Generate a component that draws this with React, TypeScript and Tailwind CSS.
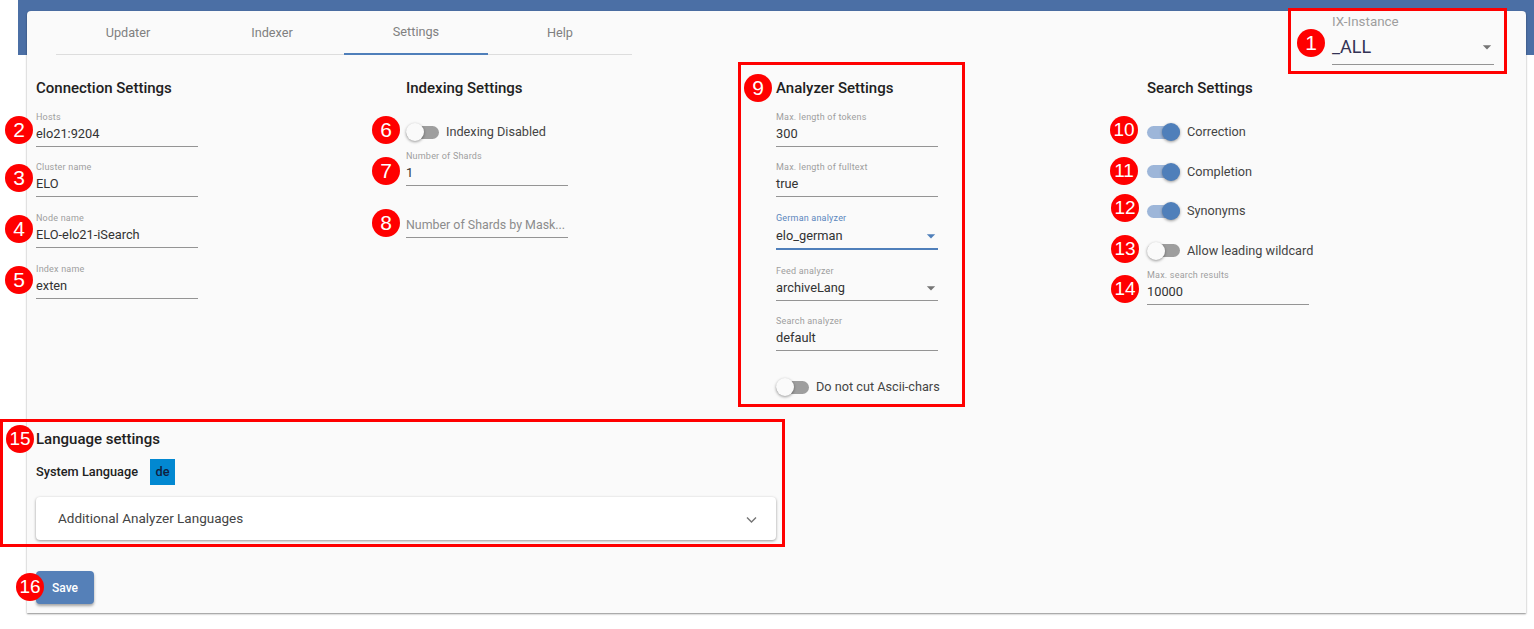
import React from 'react';

const tabs = ['Updater', 'Indexer', 'Settings', 'Help'];

const badges = [
  { n: 1, pos: 'left-[1297px] top-[29px]' },
  { n: 2, pos: 'left-[5px] top-[116px]' },
  { n: 3, pos: 'left-[5px] top-[164px]' },
  { n: 4, pos: 'left-[5px] top-[215px]' },
  { n: 5, pos: 'left-[5px] top-[266px]' },
  { n: 6, pos: 'left-[372px] top-[116px]' },
  { n: 7, pos: 'left-[372px] top-[157px]' },
  { n: 8, pos: 'left-[372px] top-[209px]' },
  { n: 9, pos: 'left-[744px] top-[74px]' },
  { n: 10, pos: 'left-[1110px] top-[116px]' },
  { n: 11, pos: 'left-[1110px] top-[157px]' },
  { n: 12, pos: 'left-[1111px] top-[194px]' },
  { n: 13, pos: 'left-[1111px] top-[235px]' },
  { n: 14, pos: 'left-[1111px] top-[275px]' },
  { n: 15, pos: 'left-[6px] top-[425px]' },
  { n: 16, pos: 'left-[16px] top-[573px]' },
];

const Arrow = ({ color = '#757575' }: { color?: string }) => (
  <svg width="20" height="20" viewBox="0 0 24 24" fill={color} className="mr-[-3px] shrink-0">
    <path d="M7 10l5 5 5-5z" />
  </svg>
);

interface FieldProps {
  label?: string;
  value: string;
  select?: boolean;
  focused?: boolean;
  className?: string;
}

const Field = ({ label, value, select, focused, className = '' }: FieldProps) => (
  <div className={`w-[162px] ${className}`}>
    {label && (
      <div className={`h-3 pt-px text-[9px] leading-3 tracking-[0.2px] ${focused ? 'text-[#5a86bd]' : 'text-[#9e9e9e]'}`}>{label}</div>
    )}
    <div
      className={`flex h-6 items-center justify-between text-[12.8px] text-[#333333] ${
        focused ? 'border-b-2 border-[#4f7fba] h-[25px]' : 'border-b border-[#949494]'
      } box-content`}
    >
      <span>{value}</span>
      {select && <Arrow color={focused ? '#4f7fba' : '#757575'} />}
    </div>
  </div>
);

const Toggle = ({ label, on, className = '' }: { label: string; on?: boolean; className?: string }) => (
  <div className={`flex h-5 items-center gap-[7px] text-[12.7px] text-[#444444] ${className}`}>
    <div className={`relative h-[13px] w-[33px] rounded-full ${on ? 'bg-[#9db6d9]' : 'bg-[#9e9e9e]'}`}>
      <div
        className={`absolute top-[-2.5px] h-[18px] w-[18px] rounded-full shadow-[0_1px_3px_rgba(0,0,0,0.4)] ${
          on ? 'right-0 bg-[#4f7fba]' : 'left-0 bg-[#fafafa]'
        }`}
      />
    </div>
    <span>{label}</span>
  </div>
);

const Heading = ({ children }: { children: React.ReactNode }) => (
  <h2 className="text-[15px] leading-5 font-medium text-[#212121]">{children}</h2>
);

const App = () => {
  return (
    <div className="relative h-[629px] w-[1534px] overflow-hidden bg-white font-['Roboto',sans-serif]">
      <div className="ml-[18px] h-[55px] bg-[#4b6fa5]" />

      <div className="relative ml-[27px] mt-[-44px] w-[1499px] rounded-t bg-[#fafafa] pb-[9px] shadow-[0_1px_2px_rgba(0,0,0,0.45)]">
        <div className="ml-[29px] flex h-11 w-[576px] border-b border-[#dddddd]">
          {tabs.map(tab => (
            <div
              key={tab}
              className={`flex h-11 w-36 items-center justify-center text-[12.7px] text-[#808080] ${
                tab === 'Settings' ? 'border-b-2 border-[#4f7fba]' : ''
              }`}
            >
              {tab}
            </div>
          ))}
        </div>

        <div className="absolute left-[1305px] top-[1px] w-[162px]">
          <div className="h-[19px] pt-px text-[13.4px] leading-[18px] text-[#9e9e9e]">IX-Instance</div>
          <div className="flex h-[31px] items-center justify-between border-b border-[#949494] pb-[2px] text-lg text-[#333355] box-content">
            <span>_ALL</span>
            <Arrow />
          </div>
        </div>

        <div className="grid grid-cols-[370px_370px_371px_370px] pl-[9px] pt-[23px]">
          <div>
            <Heading>Connection Settings</Heading>
            <Field label="Hosts" value="elo21:9204" className="mt-3" />
            <Field label="Cluster name" value="ELO" className="mt-[13px]" />
            <Field label="Node name" value="ELO-elo21-iSearch" className="mt-[14px]" />
            <Field label="Index name" value="exten" className="mt-[14px]" />
          </div>
          <div>
            <Heading>Indexing Settings</Heading>
            <Toggle label="Indexing Disabled" className="mt-6" />
            <Field label="Number of Shards" value="1" className="mt-[7px]" />
            <div className="mt-[27px] flex h-6 w-[162px] items-center whitespace-nowrap border-b border-[#949494] text-[12.4px] text-[#8c8c8c] box-content">
              Number of Shards by Mask...
            </div>
          </div>
          <div>
            <Heading>Analyzer Settings</Heading>
            <Field label="Max. length of tokens" value="300" className="mt-3" />
            <Field label="Max. length of fulltext" value="true" className="mt-[13px]" />
            <Field label="German analyzer" value="elo_german" select focused className="mt-[14px]" />
            <Field label="Feed analyzer" value="archiveLang" select className="mt-[14px]" />
            <Field label="Search analyzer" value="default" className="mt-[13px]" />
            <Toggle label="Do not cut Ascii-chars" className="mt-[26px]" />
          </div>
          <div>
            <Heading>Search Settings</Heading>
            <div className="mt-6 flex flex-col gap-[19.5px]">
              <Toggle label="Correction" on />
              <Toggle label="Completion" on />
              <Toggle label="Synonyms" on />
              <Toggle label="Allow leading wildcard" />
            </div>
            <Field label="Max. search results" value="10000" className="mt-[7.5px]" />
          </div>
        </div>

        <div className="mt-8 pl-[9px]">
          <Heading>Language settings</Heading>
          <div className="mt-[10px] flex items-center gap-3">
            <span className="text-[12.75px] font-medium text-[#212121]">System Language</span>
            <span className="flex h-[26px] w-[25px] items-center justify-center bg-[#0288d1] text-[12.75px] font-medium text-[#102040]">
              de
            </span>
          </div>
          <div className="mt-3 flex h-[43px] w-[740px] items-center justify-between rounded bg-white pl-[22px] pr-[19px] text-[13.5px] text-[#444444] shadow-[0_1px_3px_rgba(0,0,0,0.4)]">
            <span>Additional Analyzer Languages</span>
            <svg width="11" height="8" viewBox="0 0 11 8" fill="none" stroke="#757575" strokeWidth="1.4" className="mt-[3px]">
              <path d="M1 1.5 5.5 6 10 1.5" />
            </svg>
          </div>
          <button className="mt-[31px] block h-[33px] w-[58px] rounded-sm bg-[#5580b8] text-xs font-medium text-white shadow-[0_2px_3px_rgba(0,0,0,0.35)]">
            Save
          </button>
        </div>
      </div>

      {/* annotation layer */}
      <div className="absolute left-[1288px] top-[8px] h-[66px] w-[219px] border-[3px] border-[#ff0000]" />
      <div className="absolute left-[738px] top-[62px] h-[345px] w-[227px] border-[3px] border-[#ff0000]" />
      <div className="absolute left-0 top-[419px] h-[128px] w-[785px] border-[3px] border-[#ff0000]" />
      {badges.map(b => (
        <div
          key={b.n}
          className={`absolute flex h-7 w-7 items-center justify-center rounded-full bg-[#ff0000] font-['Liberation_Sans',sans-serif] text-white ${
            b.n > 9 ? 'text-[19px]' : 'text-[21px]'
          } ${b.pos}`}
        >
          {b.n}
        </div>
      ))}
    </div>
  );
};

export default App;
